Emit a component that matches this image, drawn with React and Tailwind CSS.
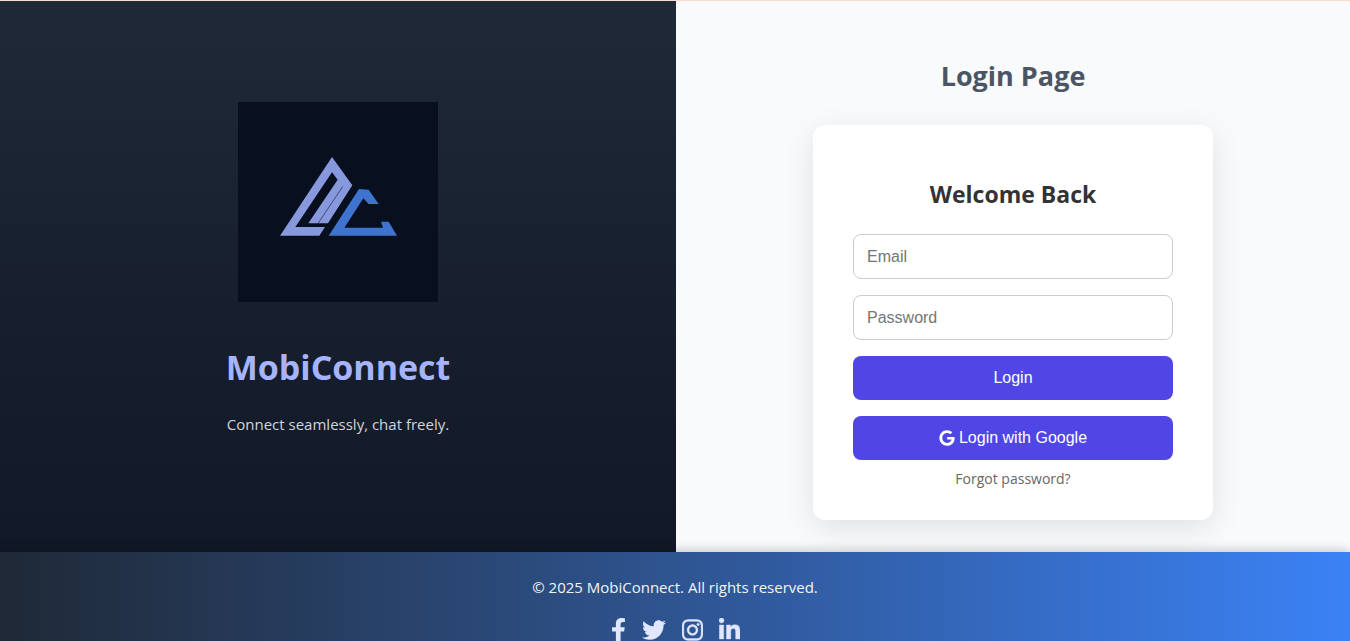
import { FaFacebookF, FaGoogle, FaInstagram, FaLinkedinIn, FaTwitter } from "react-icons/fa";

const socialLinks = [
  { label: "Facebook", Icon: FaFacebookF, size: "h-6 w-[15px]" },
  { label: "Twitter", Icon: FaTwitter, size: "h-6 w-6" },
  { label: "Instagram", Icon: FaInstagram, size: "h-6 w-[21px] stroke-current stroke-[8]" },
  { label: "LinkedIn", Icon: FaLinkedinIn, size: "h-6 w-[21px] stroke-current stroke-[8]" },
];

function Logo() {
  return (
    <svg viewBox="24 21 600 600" role="img" aria-label="MobiConnect logo" className="size-[200px] bg-[#08101f]">
      <path
        fill="#8799dc"
        d="M306 186 367 271 294 385H235L323 254 306 232 196 396H285L268 422H150Z"
      />
      <path d="M338 275 265 384" stroke="#3f4a7c" strokeWidth="3" />
      <path
        fill="#3e74d0"
        d="M387 282 416 284 446 327H416L400 310 343 398H459L453 380H476L501 422H296Z"
      />
    </svg>
  );
}

function Brand() {
  return (
    <section className="flex flex-col items-center justify-center bg-linear-to-b from-[#1f2937] to-[#111827] pb-4">
      <Logo />
      <h1 className="mt-10 text-[34px] leading-[50px] font-bold text-[#a5b4fc]">MobiConnect</h1>
      <p className="mt-5 text-[15px] leading-6 text-[#d1d5db]">Connect seamlessly, chat freely.</p>
    </section>
  );
}

function TextField({ id, type, label }) {
  return (
    <input
      id={id}
      type={type}
      aria-label={label}
      placeholder={label}
      className="h-[45px] w-full rounded-lg border border-[#cccccc] bg-white px-[13px] font-['Liberation_Sans',Arial,sans-serif] text-base text-black placeholder:text-[#757575]"
    />
  );
}

const buttonClass =
  "flex h-11 w-full items-center justify-center gap-1 rounded-lg bg-[#4f46e5] font-['Liberation_Sans',Arial,sans-serif] text-base text-white";

function LoginForm() {
  return (
    <form
      onSubmit={(event) => event.preventDefault()}
      className="flex w-full max-w-[400px] flex-col items-center gap-4 rounded-xl bg-white px-10 pt-[53px] pb-[30px] shadow-[0_8px_30px_rgba(0,0,0,0.1)]"
    >
      <h2 className="mb-2 text-[23px] leading-8 font-bold text-[#333333]">Welcome Back</h2>
      <TextField id="email" type="email" label="Email" />
      <TextField id="password" type="password" label="Password" />
      <button type="submit" className={buttonClass}>Login</button>
      <button type="button" className={buttonClass}>
        <FaGoogle className="h-4 w-4" />
        Login with Google
      </button>
      <a href="#forgot" className="-mt-2 text-sm leading-[22px] text-[#666666]">Forgot password?</a>
    </form>
  );
}

export default function App() {
  return (
    <div className="flex min-h-screen flex-col border-t border-[#f5ddd2] font-['Open_Sans','Noto_Sans',sans-serif]">
      <main className="grid flex-1 grid-cols-[676fr_674fr]">
        <Brand />
        <section className="flex flex-col items-center bg-[#f9fafc] px-4 pt-[55px] pb-8">
          <h1 className="mb-[29px] text-[27px] leading-10 font-bold text-[#4b5563]">Login Page</h1>
          <LoginForm />
        </section>
      </main>
      <footer className="relative flex flex-col items-center bg-linear-to-r from-[#1f2937] to-[#3b82f6] pt-[23px] pb-6 text-[#e0e7ff] shadow-[0_-2px_10px_rgba(0,0,0,0.2)]">
        <p className="text-[15px] leading-6 text-[#f3f4f6]">© 2025 MobiConnect. All rights reserved.</p>
        <nav aria-label="Social media" className="mt-[19px] flex gap-4">
          {socialLinks.map(({ label, Icon, size }) => (
            <a key={label} href={`#${label.toLowerCase()}`} aria-label={label}>
              <Icon className={size} />
            </a>
          ))}
        </nav>
      </footer>
    </div>
  );
}
